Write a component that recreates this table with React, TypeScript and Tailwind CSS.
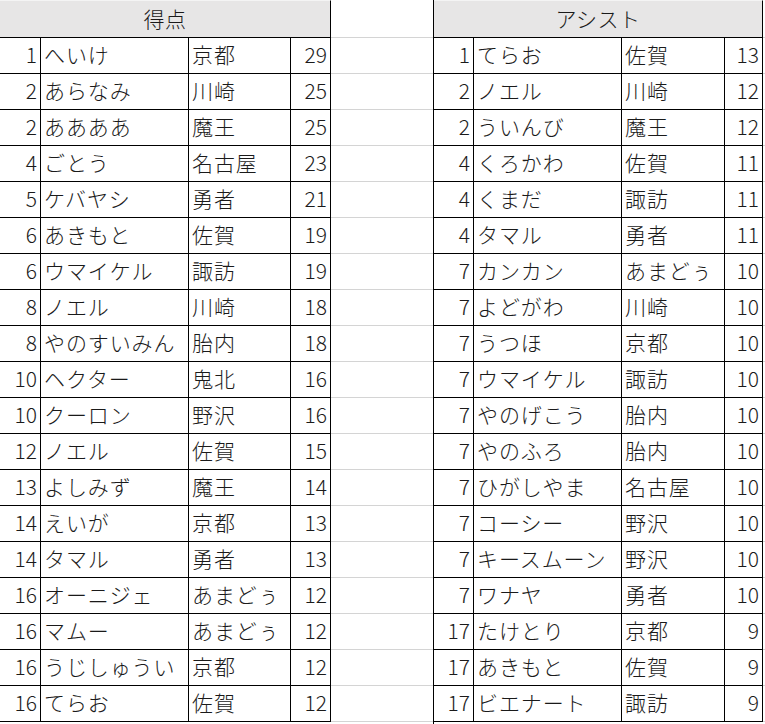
type Row = [string, string, string, string]

const scoring: Row[] = [
  ["1", "へいけ", "京都", "29"],
  ["2", "あらなみ", "川崎", "25"],
  ["2", "ああああ", "魔王", "25"],
  ["4", "ごとう", "名古屋", "23"],
  ["5", "ケバヤシ", "勇者", "21"],
  ["6", "あきもと", "佐賀", "19"],
  ["6", "ウマイケル", "諏訪", "19"],
  ["8", "ノエル", "川崎", "18"],
  ["8", "やのすいみん", "胎内", "18"],
  ["10", "ヘクター", "鬼北", "16"],
  ["10", "クーロン", "野沢", "16"],
  ["12", "ノエル", "佐賀", "15"],
  ["13", "よしみず", "魔王", "14"],
  ["14", "えいが", "京都", "13"],
  ["14", "タマル", "勇者", "13"],
  ["16", "オーニジェ", "あまどぅ", "12"],
  ["16", "マムー", "あまどぅ", "12"],
  ["16", "うじしゅうい", "京都", "12"],
  ["16", "てらお", "佐賀", "12"],
]

const assists: Row[] = [
  ["1", "てらお", "佐賀", "13"],
  ["2", "ノエル", "川崎", "12"],
  ["2", "ういんび", "魔王", "12"],
  ["4", "くろかわ", "佐賀", "11"],
  ["4", "くまだ", "諏訪", "11"],
  ["4", "タマル", "勇者", "11"],
  ["7", "カンカン", "あまどぅ", "10"],
  ["7", "よどがわ", "川崎", "10"],
  ["7", "うつほ", "京都", "10"],
  ["7", "ウマイケル", "諏訪", "10"],
  ["7", "やのげこう", "胎内", "10"],
  ["7", "やのふろ", "胎内", "10"],
  ["7", "ひがしやま", "名古屋", "10"],
  ["7", "コーシー", "野沢", "10"],
  ["7", "キースムーン", "野沢", "10"],
  ["7", "ワナヤ", "勇者", "10"],
  ["17", "たけとり", "京都", "9"],
  ["17", "あきもと", "佐賀", "9"],
  ["17", "ビエナート", "諏訪", "9"],
]

function Table({ title, rows, right }: { title: string; rows: Row[]; right?: boolean }) {
  // right table has its own left border and a narrower score column
  const w = right
    ? ["w-[40px]", "w-[148px]", "w-[103px]", "w-[38px]"]
    : ["w-[41px]", "w-[148px]", "w-[102px]", "w-[40px]"]

  return (
    <div className={`flex flex-col ${right ? "border-l border-black" : ""}`}>
      <div className="h-[38px] flex items-center justify-center bg-[#e7e6e6] border-t border-t-[#f4f4f4] border-b border-r border-black tracking-[0.5px]">
        {title}
      </div>
      {rows.map((r, i) => (
        <div key={i} className="flex h-[36px] border-b border-black leading-[33px]">
          <div className={`${w[0]} border-r border-black text-right pr-[3px]`}>{r[0]}</div>
          <div className={`${w[1]} border-r border-black pl-[3px] tracking-[0.9px] whitespace-nowrap overflow-hidden`}>{r[1]}</div>
          <div className={`${w[2]} border-r border-black pl-[3px] tracking-[0.9px] whitespace-nowrap overflow-hidden`}>{r[2]}</div>
          <div className={`${w[3]} border-r border-black text-right pr-[3px]`}>{r[3]}</div>
        </div>
      ))}
    </div>
  )
}

function Blank({ width }: { width: string }) {
  return (
    <div className={`flex flex-col ${width}`}>
      <div className="h-[38px] border-b border-[#d4d4d4]" />
      {scoring.map((_, i) => (
        <div key={i} className="h-[36px] border-b border-[#d4d4d4]" />
      ))}
    </div>
  )
}

export default function App() {
  return (
    <div
      className="w-[765px] h-[724px] bg-white overflow-hidden flex text-[21px] font-light text-[#1a1a1a]"
      style={{ fontFamily: '"Noto Sans CJK JP", "Noto Sans", sans-serif' }}
    >
      <Table title="得点" rows={scoring} />
      <Blank width="w-[103px]" />
      <Table title="アシスト" rows={assists} right />
      <Blank width="w-[2px]" />
    </div>
  )
}
